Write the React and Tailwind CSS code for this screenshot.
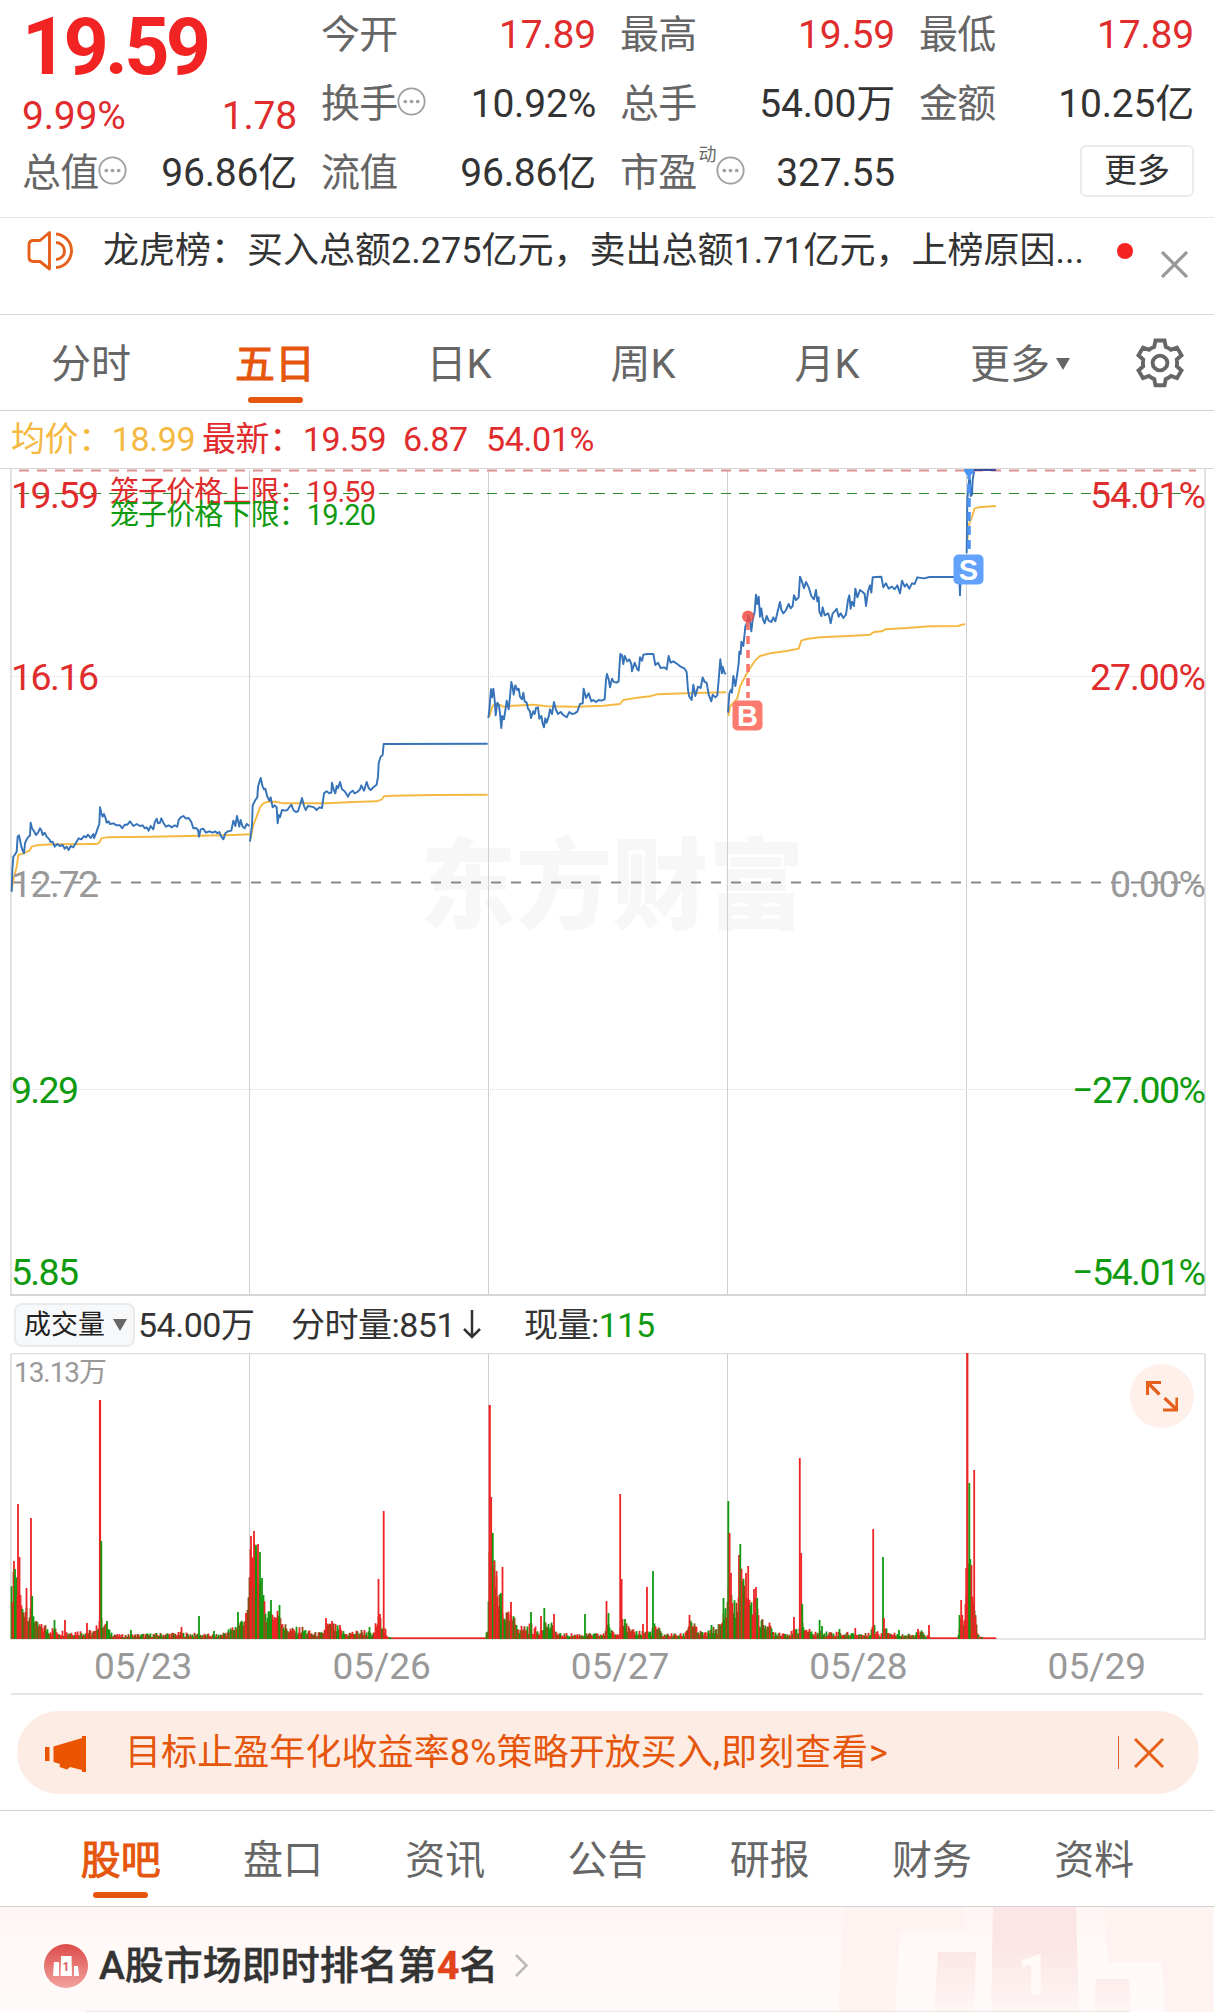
import React from 'react'

const quoteColumns = [
  [
    { label: '今开', value: '17.89', up: true },
    { label: '换手', value: '10.92%', info: true },
    { label: '流值', value: '96.86亿' },
  ],
  [
    { label: '最高', value: '19.59', up: true },
    { label: '总手', value: '54.00万' },
    { label: '市盈', value: '327.55', sup: '动', info: true },
  ],
  [
    { label: '最低', value: '17.89', up: true },
    { label: '金额', value: '10.25亿' },
  ],
]

const periods = ['分时', '五日', '日K', '周K', '月K']
const sections = ['股吧', '盘口', '资讯', '公告', '研报', '财务', '资料']
const dates = ['05/23', '05/26', '05/27', '05/28', '05/29']
const dayLines = [249.5, 488.5, 727.5, 966.5]

// Points are kept in thirds of a pixel, relative to each day's origin
const series = [
  {
    origin: [0, 720],
    price:
      '35,515 37,450 40,410 44,405 50,395 53,350 57,346 60,360 64,380 68,392 72,400 75,370 78,362 84,352 90,346 92,308 96,325 102,334 108,345 114,338 120,325 124,330 128,345 134,338 140,350 148,358 152,366 158,365 164,380 172,372 180,378 188,375 194,386 200,380 206,390 212,378 220,382 228,368 236,355 244,358 252,348 258,352 264,344 272,354 280,342 282,354 288,340 294,322 298,312 300,262 304,280 308,290 312,282 316,292 320,308 326,304 330,312 340,310 350,316 360,316 367,325 374,314 382,314 390,304 400,318 410,312 420,318 428,316 434,325 440,322 446,332 452,318 460,328 464,308 470,296 474,310 480,308 484,295 490,308 498,320 506,316 516,322 524,316 532,320 536,300 542,292 550,288 558,296 566,294 574,306 580,325 588,324 594,330 597,350 602,328 610,326 618,338 628,334 638,338 646,334 652,340 658,336 664,350 670,358 676,340 684,334 694,332 700,302 706,318 711,288 718,320 722,300 728,320 734,325 740,312 748,318',
    avg: '35,512 42,470 50,440 55,405 70,400 88,392 95,380 110,376 130,374 165,373 290,372 298,368 304,355 320,352 450,350 600,347 700,345 750,343',
  },
  {
    origin: [0, 720],
    price:
      '750,365 756,315 758,256 766,240 772,232 774,200 782,174 788,200 792,208 796,206 802,230 808,242 812,232 818,262 824,256 830,262 833,310 836,285 840,292 846,270 854,272 862,270 866,264 874,254 880,270 888,276 894,274 900,255 906,234 912,258 917,270 924,258 934,260 942,262 950,270 958,262 966,264 972,220 980,214 988,220 994,218 996,188 1002,212 1006,220 1010,198 1014,205 1020,186 1026,208 1034,214 1044,230 1050,218 1058,212 1064,220 1072,216 1080,208 1084,196 1092,212 1100,186 1106,204 1112,210 1120,202 1130,194 1134,170 1136,130 1142,110 1148,105 1151,72 1463,71',
    avg: '752,355 760,315 770,290 780,262 790,250 805,245 825,245 850,250 980,250 1060,246 1130,244 1146,238 1152,229 1180,227 1300,225 1463,224',
  },
  {
    origin: [400, 600],
    price:
      '265,354 268,330 273,268 276,292 280,266 284,300 287,346 292,308 297,316 300,340 304,384 307,348 312,358 318,318 320,302 326,328 330,290 334,246 338,262 341,284 346,256 352,270 356,266 360,290 366,298 370,278 374,304 380,308 384,326 390,334 393,354 400,334 404,342 408,324 414,322 418,356 424,348 428,370 432,382 436,355 440,368 446,350 450,328 456,342 462,306 468,330 474,342 482,336 490,345 500,352 508,336 516,342 524,340 532,335 540,312 548,310 551,266 558,294 566,280 574,304 580,300 588,306 596,300 604,302 614,298 618,240 621,222 626,238 630,262 636,236 642,246 650,248 656,244 658,205 661,162 666,166 670,192 674,168 682,184 688,178 694,192 696,214 704,188 712,208 716,212 720,172 726,182 730,164 742,162 760,162 766,195 774,188 782,204 792,202 800,208 806,168 812,188 820,184 832,192 842,200 854,206 860,216 864,270 868,290 875,300 880,254 886,288 894,260 902,264 908,232 914,246 920,248 926,284 934,304 938,284 946,292 952,286 956,240 961,178 966,220 968,200 974,220 978,222',
    avg: '268,350 276,322 284,312 295,312 310,320 340,317 400,314 440,319 530,320 610,317 660,312 670,300 700,295 750,289 770,283 860,280 978,277',
  },
  {
    origin: [720, 460],
    price:
      '24,758 28,700 32,690 36,698 40,648 46,678 52,640 56,610 58,575 62,582 64,545 70,558 76,500 82,485 86,466 90,485 94,514 98,480 104,455 108,404 112,432 116,410 120,470 124,445 128,475 134,490 140,468 146,482 154,486 160,472 166,484 172,458 180,426 184,450 190,460 198,450 206,432 212,445 218,438 222,406 228,420 236,412 240,350 246,365 252,385 258,366 266,382 274,408 282,418 288,390 292,424 296,412 298,455 304,468 308,442 314,466 324,460 328,470 332,490 338,460 346,452 350,446 356,470 362,460 370,474 378,464 384,420 388,406 392,446 396,425 402,438 406,386 412,412 420,390 428,396 434,402 438,438 444,395 450,376 454,398 458,352 484,350 490,382 498,370 506,386 516,380 524,388 532,376 540,400 546,362 554,380 560,372 568,386 576,370 584,372 592,352 612,355 628,351 718,351 720,406 722,351',
    avg: '25,768 30,740 52,715 60,680 75,650 90,625 105,602 120,588 150,580 200,573 236,566 244,542 260,537 300,532 400,527 450,524 462,516 485,514 496,508 560,504 630,499 715,498 725,494 735,493',
  },
  {
    origin: [720, 460],
    price: '740,280 742,120 747,60 750,60 752,108 756,104 758,60 763,30 828,30',
    avg: '742,240 748,190 758,165 764,145 775,142 828,138',
  },
]

// Typical bar height along the volume chart
const envelope = [
  [11, 58], [14, 72], [17, 60], [20, 50], [22, 36], [26, 42], [28, 30], [33, 32], [36, 18], [42, 15],
  [50, 11], [60, 8], [80, 8], [95, 8], [99, 24], [103, 20], [109, 8], [118, 4], [150, 5], [180, 6],
  [200, 5], [218, 4], [230, 10], [240, 20], [247, 30], [250, 102], [256, 92], [259, 82], [262, 50],
  [265, 34], [270, 34], [275, 28], [279, 34], [284, 14], [292, 10], [302, 11], [312, 6], [322, 6],
  [327, 18], [335, 13], [345, 6], [365, 9], [372, 4], [378, 24], [383, 18], [387, 2], [397, 1],
  [485, 1], [487, 12], [489, 90], [493, 90], [497, 54], [501, 36], [505, 30], [513, 24], [520, 12],
  [531, 14], [538, 8], [544, 20], [550, 15], [558, 5], [580, 5], [604, 5], [607, 22], [611, 8],
  [618, 5], [621, 30], [625, 18], [630, 8], [650, 8], [655, 15], [662, 5], [684, 5], [690, 24],
  [697, 8], [706, 6], [720, 15], [727, 46], [729, 70], [733, 42], [737, 36], [740, 80], [745, 52],
  [748, 60], [752, 36], [756, 48], [759, 20], [765, 20], [773, 8], [790, 6], [798, 12], [803, 14],
  [811, 7], [830, 7], [850, 6], [866, 5], [873, 14], [880, 4], [884, 18], [890, 6], [912, 4],
  [920, 8], [931, 1], [957, 1], [960, 24], [964, 20], [967, 90], [972, 72], [975, 24], [979, 3],
  [984, 1], [996, 1],
]

const spikes = [
  [14, 78, 'r'], [15, 70, 'g'], [18, 135, 'r'], [19.5, 82, 'r'], [26.5, 51, 'r'], [31, 121, 'r'], [32.2, 43, 'g'], [54.5, 19, 'g'],
  [65, 19, 'r'], [87, 16, 'r'], [100, 239, 'r'], [101.3, 98, 'g'], [107, 18, 'g'], [131, 9, 'g'],
  [181.5, 12, 'r'], [199, 23, 'g'], [214, 8, 'g'], [238, 27, 'g'], [246, 26, 'r'], [251, 103, 'r'], [254, 108, 'r'],
  [256, 94, 'g'], [258, 95, 'r'], [260, 87, 'g'], [262, 61, 'g'], [271, 39, 'g'], [279.5, 34, 'g'], [326, 21, 'r'], [332, 18, 'r'],
  [340, 14, 'r'], [369.5, 12, 'g'], [378.5, 60, 'r'], [380, 25, 'r'], [383.7, 128, 'r'], [489.7, 234, 'r'], [491.2, 142, 'r'],
  [492.8, 106, 'g'], [494.2, 78, 'r'], [496.5, 68, 'r'], [502.5, 72, 'r'], [501, 46, 'g'], [511, 37, 'r'], [531, 27, 'g'], [541, 23, 'r'],
  [544.3, 31, 'g'], [554, 25, 'r'], [585, 25, 'g'], [606.5, 38, 'r'], [608.5, 26, 'g'], [620.2, 145, 'r'],
  [621.6, 60, 'r'], [625, 20, 'g'], [643, 15, 'r'], [647, 52, 'r'], [653, 68, 'g'], [689.5, 24, 'r'],
  [711.5, 14, 'g'], [723.5, 41, 'g'], [728.3, 138, 'g'], [729.6, 106, 'r'], [731, 66, 'r'], [739, 84, 'r'],
  [740.3, 95, 'g'], [741.5, 70, 'r'], [746, 66, 'r'], [748.2, 73, 'r'], [754, 50, 'r'], [756, 52, 'r'], [757.2, 41, 'g'], [794, 22, 'r'],
  [799.8, 181, 'r'], [801.2, 86, 'r'], [802.3, 35, 'g'], [819.6, 19, 'g'], [822, 13, 'g'], [839.5, 10, 'g'],
  [855.3, 11, 'r'], [873.2, 110, 'r'], [883, 82, 'g'], [884, 21, 'r'], [899, 9, 'g'], [918, 10, 'r'],
  [929, 14, 'r'], [959.5, 24, 'g'], [961.2, 39, 'r'], [962.3, 24, 'r'], [966.2, 71, 'r'], [967.3, 286, 'r'],
  [969.3, 156, 'g'], [970.3, 80, 'g'], [971.5, 74, 'r'], [974.2, 169, 'r'], [975.3, 21, 'r'],
]

const barColor = { r: '#ee2424', g: '#109a10', m: '#8a4a12' }

const noise = (n) => {
  const s = Math.sin(n * 12.9898) * 43758.5453
  return s - Math.floor(s)
}

const heightAt = (x) => {
  const i = envelope.findIndex((p) => p[0] >= x)
  if (i <= 0) return envelope[0][1]
  const [x0, h0] = envelope[i - 1]
  const [x1, h1] = envelope[i]
  return h0 + ((h1 - h0) * (x - x0)) / (x1 - x0)
}

const bars = []
for (let x = 11; x < 996; x++) {
  const h = heightAt(x)
  const k = noise(x + 7)
  // quiet minutes swing more than busy ones
  const swing = h < 15 ? 0.35 + noise(x) * 0.85 : 0.5 + noise(x) * 0.5
  bars.push([
    x + 0.5,
    Math.max(1.5, h * swing),
    h < 1.5 ? 'r' : k < 0.4 ? 'r' : k < 0.7 ? 'g' : 'm',
  ])
}

const InfoIcon = () => (
  <svg className="h-[29px] w-[29px] shrink-0 -mt-1" viewBox="0 0 28 28" fill="none">
    <circle cx="14" cy="14" r="12.7" stroke="#a0a0a0" strokeWidth="1.800" />
    <circle cx="8" cy="14" r="1.8" fill="#a0a0a0" />
    <circle cx="14" cy="14" r="1.8" fill="#a0a0a0" />
    <circle cx="20" cy="14" r="1.8" fill="#a0a0a0" />
  </svg>
)

const Quote = ({ label, value, up, info, sup }) => (
  <div className="flex h-[69px] items-center justify-between whitespace-nowrap">
    <div className="flex items-center text-[#666]">
      <span className="tracking-[-0.8px]">{label}</span>
      {sup && <span className="mb-9 ml-0.5 text-[18px] leading-5">{sup}</span>}
      {info && <InfoIcon />}
    </div>
    <span className={up ? 'tracking-[-0.2px] text-[#e02c2c]' : 'tracking-[-0.2px] text-[#333]'}>
      {value}
    </span>
  </div>
)

const QuoteHeader = () => (
  <header className="grid h-[218px] grid-cols-4 gap-6 border-b border-[#e8e8e8] pl-[22px] pr-5 text-[39px] leading-[46px]">
    <div className="text-[#e02c2c]">
      <div className="flex h-[93px] items-center text-[79px] font-bold tracking-[-3.8px] text-[#f12323]">
        19.59
      </div>
      <div className="flex h-[45px] items-center justify-between tracking-[-0.2px]">
        <span>9.99%</span>
        <span>1.78</span>
      </div>
      <Quote label="总值" value="96.86亿" info />
    </div>
    {quoteColumns.map((items, i) => (
      <div key={i}>
        {items.map((item) => (
          <Quote key={item.label} {...item} />
        ))}
        {i === 2 && (
          <div className="flex h-[66px] items-center justify-end">
            <button className="h-[52px] w-[114px] rounded-md border-2 border-[#ebebeb] text-[33px] leading-[44px] text-[#333]">
              更多
            </button>
          </div>
        )}
      </div>
    ))}
  </header>
)

const NewsBar = () => (
  <div className="flex h-[97px] items-start border-b border-[#d9d9d9] pl-[27px] pr-[26px]">
    <svg
      className="mt-3 h-[42px] w-12 shrink-0"
      viewBox="0 0 48 42"
      fill="none"
      stroke="#e5601a"
      strokeWidth="2.9"
      strokeLinejoin="round"
    >
      <path d="M22.500 2.500v36.500l-9.500-7.500H6.500q-4.500 0-4.500-4.500v-12q0-4.500 4.500-4.500H13z" />
      <path d="M29 12.500a8.500 8.500 0 0 1 0 17" />
      <path d="M29 4a16.800 16.800 0 0 1 0 33.500" />
    </svg>
    <p className="ml-7 mt-2 w-[1014px] shrink-0 whitespace-nowrap text-[36px] leading-[50px] text-[#333]">
      龙虎榜：买入总额2.275亿元，卖出总额1.71亿元，上榜原因...
    </p>
    <i className="mt-[25px] h-4 w-4 shrink-0 rounded-full bg-[#f52222]" />
    <svg className="ml-auto mt-[33px] h-[27px] w-[27px]" viewBox="0 0 27 27" stroke="#999" strokeWidth="3.200">
      <path d="M1 1l25 25M26 1L1 26" />
    </svg>
  </div>
)

const PeriodTabs = () => (
  <nav className="flex h-24 border-b border-[#d2d2d2] text-[40px] leading-[50px] text-[#666]">
    {periods.map((name) => (
      <div
        key={name}
        className={
          name === '五日'
            ? 'flex w-[184px] flex-col items-center pr-0.5 pt-[25px] text-[#e5560c] [-webkit-text-stroke:1px_#e5560c]'
            : 'flex w-[184px] flex-col items-center pr-0.5 pt-[25px]'
        }
      >
        {name}
        {name === '五日' && <span className="mt-[7px] h-1.5 w-[55px] rounded-full bg-[#e5560c]" />}
      </div>
    ))}
    <div className="flex w-[204px] justify-center pr-1 pt-[25px]">
      更多
      <svg className="ml-1.5 mt-[17px] h-3.5 w-3.5" viewBox="0 0 14 14">
        <path d="M0 1h14L7 13z" fill="#666" />
      </svg>
    </div>
    <svg
      className="ml-[11px] mt-[23px] h-[50px] w-[50px]"
      viewBox="0 0 50 50"
      fill="none"
      stroke="#666"
      strokeWidth="3.9"
      strokeLinejoin="miter"
    >
      <path d="M20.500 2.500h9l1.300 6.300q2.800 1 5.200 3l6-2.200 4.500 7.700-4.700 4.200q.6 3.500 0 6.800l4.700 4.200-4.500 7.700-6-2.200q-2.400 2-5.200 3l-1.300 6.300h-9l-1.300-6.300q-2.800-1-5.200-3l-6 2.200-4.500-7.700 4.700-4.200q-.6-3.300 0-6.800l-4.700-4.200 4.500-7.700 6 2.200q2.400-2 5.200-3z" />
      <circle cx="25" cy="25" r="7.400" />
    </svg>
  </nav>
)

const Tag = ({ x, y, color, letter }) => (
  <g>
    <rect x={x} y={y} width="30" height="30" rx="5" fill={color} />
    <text x={x + 15} y={y + 25.500} fontSize="29" fontWeight="700" fill="#fff" textAnchor="middle" fontFamily="Liberation Sans, sans-serif">
      {letter}
    </text>
  </g>
)

const PriceChart = () => (
  <svg className="block h-[828px] w-full" viewBox="0 468 1214 828" fill="none">
    <text x="420" y="921" fontSize="99" fontWeight="900" textLength="384" lengthAdjust="spacingAndGlyphs" fill="#f7f7f7">
      东方财富
    </text>
    <path d="M0 468.500H1214" stroke="#d6d6d6" />
    <path d="M11 469V1296M1205 469V1296" stroke="#e2e2e2" strokeWidth="2" />
    <path d="M10 1295H1206" stroke="#d6d6d6" strokeWidth="2" />
    {dayLines.map((x) => (
      <path key={x} d={`M${x} 470V1295`} stroke="#d0d0d0" />
    ))}
    <path d="M12 676.500H1204M12 1089.500H1204" stroke="#dcdcdc" strokeDasharray="1 1" />
    <path d="M13 882.500H1204" stroke="#8a8a8a" strokeWidth="2" strokeDasharray="10 10" strokeDashoffset="2" />

    {series.map(({ origin, price, avg }, i) => (
      <g
        key={i}
        transform={`translate(${origin[0]} ${origin[1]}) scale(0.33333)`}
        strokeWidth="5.800"
        strokeLinejoin="round"
      >
        <polyline points={avg} stroke="#f5b942" />
        <polyline points={price} stroke="#3673b8" />
      </g>
    ))}

    <path d="M19 470.500H1196" stroke="#d99090" strokeWidth="2" strokeDasharray="10 8" />
    <path d="M19 493.500H1196" stroke="#2b8a2b" strokeDasharray="10 8" />
    <path d="M974 470H996" stroke="#3b4a99" strokeWidth="2" />

    <g fontSize="37.500" fill="#e02c2c">
      <text x="11" y="508" textLength="88">19.59</text>
      <text x="11" y="690" textLength="88">16.16</text>
      <text x="11" y="897" textLength="88" fill="#999">12.72</text>
      <text x="11" y="1103" textLength="68" fill="#109a10">9.29</text>
      <text x="11" y="1285" textLength="68" fill="#109a10">5.85</text>
      <g textAnchor="end">
        <text x="1206" y="508" textLength="116">54.01%</text>
        <text x="1206" y="690" textLength="116">27.00%</text>
        <text x="1206" y="897" textLength="96" fill="#999">0.00%</text>
        <text x="1206" y="1103" textLength="134" fill="#109a10">−27.00%</text>
        <text x="1206" y="1285" textLength="134" fill="#109a10">−54.01%</text>
      </g>
    </g>
    <g fontSize="29">
      <text x="110" y="502" textLength="266" fill="#e02c2c">笼子价格上限：19.59</text>
      <text x="110" y="525" textLength="266" fill="#109a10">笼子价格下限：19.20</text>
    </g>

    <path d="M748 622V698" stroke="#f8746a" strokeWidth="3.500" strokeDasharray="8 6" />
    <circle cx="748" cy="616.500" r="6" fill="#f04c44" fillOpacity=".85" />
    <Tag x={732.500} y={700.500} color="#fb7c6e" letter="B" />
    <path d="M969 470V554" stroke="#4b93f7" strokeWidth="3.500" strokeDasharray="9 5" />
    <path d="M964 469h10a5 6.500 0 0 1-10 0z" fill="#4b93f7" />
    <Tag x={953.500} y={554.500} color="#62a2fc" letter="S" />
  </svg>
)

const VolumeBar = () => (
  <div className="flex h-[57px] items-center pl-3.5 text-[34px] leading-[44px] tracking-[-0.5px] text-[#333]">
    <button className="flex h-11 w-[121px] items-center rounded-lg border-2 border-[#e9eaec] bg-[#f7f8fa] pl-2 text-[27px] tracking-normal text-[#222]">
      成交量
      <svg className="ml-2 h-3 w-3.5" viewBox="0 0 14 12">
        <path d="M0 0h14L7 12z" fill="#666" />
      </svg>
    </button>
    <span className="ml-[3px] w-[153px]">54.00万</span>
    <span className="flex w-[233px] items-center">
      分时量:851
      <svg className="ml-[7px] h-[29px] w-5" viewBox="0 0 20 29" fill="none" stroke="#333" strokeWidth="2.500">
        <path d="M10 0v27M2 19l8 8 8-8" />
      </svg>
    </span>
    <span>
      现量:<span className="text-[#109a10]">115</span>
    </span>
  </div>
)

const VolumeChart = () => (
  <div className="relative">
    <svg className="block h-[287px] w-full" viewBox="0 1353 1214 287" fill="none">
      <path d="M10 1353.500H1206M10 1639H1206" stroke="#dedede" strokeWidth="1.500" />
      <path d="M11 1353V1640M1205 1353V1640" stroke="#e2e2e2" strokeWidth="2" />
      {dayLines.map((x) => (
        <path key={x} d={`M${x} 1353V1639`} stroke="#d0d0d0" />
      ))}
      {[...bars, ...spikes].map(([x, h, c], i) => (
        <path key={i} d={`M${x} 1639V${1639 - h}`} stroke={barColor[c]} strokeWidth={h > 200 ? 2.2 : 1.8} />
      ))}
      <text x="14" y="1382" fontSize="28" textLength="93" fill="#999">13.13万</text>
    </svg>
    <button className="absolute right-5 top-[11px] flex h-16 w-16 items-center justify-center rounded-full bg-[#fff1ea]">
      <svg className="h-8 w-8" viewBox="0 0 32 32" fill="none" stroke="#e5601a" strokeWidth="3.200">
        <path d="M1.500 15V2.500H15M2 3l11.500 11.500M31 17.500V30H17M30.500 29.500L18.500 18" />
      </svg>
    </button>
  </div>
)

const Promo = () => (
  <div className="ml-[17px] mr-[15px] mt-4 flex h-[83px] items-center rounded-full bg-[#fdece3] pl-7 pr-[35px] text-[#e5560c]">
    <svg className="mt-0.5 h-9 w-[41px]" viewBox="0 0 41 36" fill="#eb5500">
      <path d="M0 11h4.500v14H0zM8.500 10.500L37 2V0h4v36h-4v-2l-12-3-3 2.500-7.500-2.500.5-3-6.500-2z" />
    </svg>
    <span className="ml-[39px] text-[36px] leading-[50px] tracking-[0.08px]">
      目标止盈年化收益率8%策略开放买入
      <span className="tracking-[1px]">,即刻查看&gt;</span>
    </span>
    <i className="ml-auto h-[33px] w-px bg-[#d9632a]" />
    <svg className="ml-[15px] h-[30px] w-[30px]" viewBox="0 0 30 30" stroke="#e5601a" strokeWidth="3">
      <path d="M1 1l28 28M29 1L1 29" />
    </svg>
  </div>
)

const SectionTabs = () => (
  <nav className="mt-4 flex h-[97px] border-y border-[#d2d2d2] px-[39px] text-[40px] leading-[50px] text-[#666]">
    {sections.map((name, i) => (
      <div
        key={name}
        className={
          i === 0
            ? 'flex flex-1 flex-col items-center pl-px pt-[25px] text-[#e5560c] [-webkit-text-stroke:1px_#e5560c]'
            : 'flex flex-1 flex-col items-center pl-px pt-[25px]'
        }
      >
        {name}
        {i === 0 && <span className="mt-1.5 h-1.5 w-[55px] rounded-full bg-[#e5560c]" />}
      </div>
    ))}
  </nav>
)

const RankRow = () => (
  <div className="relative h-[105px] overflow-hidden bg-linear-to-b from-[#fff5f4] via-[#fffaf8] to-[#fffafa]">
    <svg className="absolute right-0 top-0 h-[105px] w-[390px]" viewBox="824 1907 390 105">
      <defs>
        <linearGradient id="podium" x1="0" y1="0" x2="0" y2="1">
          <stop offset="0.4" stopColor="#fbe6e5" />
          <stop offset="1" stopColor="#fef6f5" />
        </linearGradient>
      </defs>
      <path d="M844 1907H965L964 1930H900L895 2012H838zM1104 1907H1212L1214 2012H1165L1162 1962H1108z" fill="#fff3f2" />
      <path d="M993 1907H1076L1079 2012H991zM938 1952H976L974 2012H934zM1096 1979H1129L1131 2012H1094z" fill="url(#podium)" />
      <text x="1017" y="1995" fontSize="58" fontWeight="900" fill="#fffaf8">1</text>
    </svg>
    <div className="relative flex h-full items-center pl-11 pt-3 text-[39px] font-medium leading-[50px] text-[#333]">
      <svg className="h-11 w-11" viewBox="0 0 44 44">
        <defs>
          <linearGradient id="badge" x1="0" y1="0" x2="0" y2="1">
            <stop offset="0" stopColor="#dc4c4a" />
            <stop offset="1" stopColor="#f2a29e" />
          </linearGradient>
        </defs>
        <circle cx="22" cy="22" r="22" fill="url(#badge)" />
        <path d="M10 18h5v14H9zM17 12h10.500l.5 20H16.500zM30 22h4l1 10h-5z" fill="#fff" />
        <text x="22" y="27" fontSize="12" fontWeight="700" fill="#dc5c59" textAnchor="middle">1</text>
      </svg>
      <span className="ml-[11px] [-webkit-text-stroke:0.4px]">
        A股市场即时排名第<b className="text-[#e2431b]">4</b>名
      </span>
      <svg className="ml-[16px] h-[23px] w-[15px]" viewBox="0 0 15 23" fill="none" stroke="#bbb" strokeWidth="2.600">
        <path d="M2 1l10.500 10.500L2 22" />
      </svg>
    </div>
    <div className="absolute bottom-0 left-[86px] h-px w-[1044px] bg-[#efe4df]" />
  </div>
)

const App = () => (
  <div className="w-full overflow-hidden bg-white font-[Roboto,'Noto_Sans_CJK_SC',sans-serif]">
    <QuoteHeader />
    <NewsBar />
    <PeriodTabs />
    <div className="flex h-14 items-center whitespace-pre pl-[11px] text-[34px] leading-[44px] tracking-[-0.4px] text-[#e02c2c]">
      <span className="w-[191px] text-[#f5b942]">均价：18.99</span>
      <span className="w-[201px]">最新：19.59</span>
      <span className="w-[83px]">6.87</span>
      <span>54.01%</span>
    </div>
    <div className="pt-px">
      <PriceChart />
    </div>
    <VolumeBar />
    <VolumeChart />
    <div className="mx-[11px] flex h-[55px] border-b-2 border-[#e4e4e4] text-[37px] leading-[54px] text-[#999]">
      {dates.map((d) => (
        <span key={d} className="flex-1 pl-[26px] text-center">
          {d}
        </span>
      ))}
    </div>
    <Promo />
    <SectionTabs />
    <RankRow />
  </div>
)

export default App
